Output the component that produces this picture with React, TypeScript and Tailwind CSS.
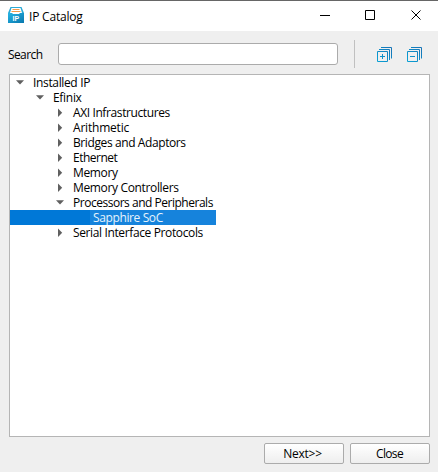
import React from "react";

type Row = { label: string; depth: number; arrow?: "open" | "closed"; tracking: string; selected?: boolean };

const rows: Row[] = [
  { label: "Installed IP", depth: 0, arrow: "open", tracking: "tracking-[-0.35px]" },
  { label: "Efinix", depth: 1, arrow: "open", tracking: "tracking-[-0.3px]" },
  { label: "AXI Infrastructures", depth: 2, arrow: "closed", tracking: "tracking-[-0.39px]" },
  { label: "Arithmetic", depth: 2, arrow: "closed", tracking: "tracking-[-0.2px]" },
  { label: "Bridges and Adaptors", depth: 2, arrow: "closed", tracking: "tracking-[-0.4px]" },
  { label: "Ethernet", depth: 2, arrow: "closed", tracking: "tracking-[-0.5px]" },
  { label: "Memory", depth: 2, arrow: "closed", tracking: "tracking-[-0.35px]" },
  { label: "Memory Controllers", depth: 2, arrow: "closed", tracking: "tracking-[-0.35px]" },
  { label: "Processors and Peripherals", depth: 2, arrow: "open", tracking: "tracking-[-0.48px]" },
  { label: "Sapphire SoC", depth: 3, tracking: "tracking-[-0.38px]", selected: true },
  { label: "Serial Interface Protocols", depth: 2, arrow: "closed", tracking: "tracking-[-0.37px]" },
];

const indents = ["w-0", "w-5", "w-10", "w-[60px]"];

function Arrow({ kind }: { kind?: "open" | "closed" }) {
  return (
    <svg width="20" height="15" viewBox="0 0 20 15" className="shrink-0">
      {kind === "open" && <path d="M6 5.3h8L10 9.6z" fill="#606060" />}
      {kind === "closed" && <path d="M8 3.5v8.5L12.2 7.7z" fill="#606060" />}
    </svg>
  );
}

function StackIcon({ plus }: { plus?: boolean }) {
  const id = plus ? "expandTone" : "collapseTone";
  return (
    <svg width="16" height="16" viewBox="0 0 16 16" fill="none" stroke={`url(#${id})`}>
      <defs>
        <linearGradient id={id} gradientUnits="userSpaceOnUse" x1="0" y1="16" x2="16" y2="0">
          <stop stopColor="#08a5d8" />
          <stop offset="1" stopColor="#176fb3" />
        </linearGradient>
      </defs>
      <path d="M.5 4.5h10v10H.5zM2 2.5h10.500V13M4 .5h10.500V11.500" />
      <path d={plus ? "M3 9.5h5" : "M3 9.5h5"} />
      {plus && <path d="M5.5 7v5" />}
    </svg>
  );
}

export default function App() {
  return (
    <div className="flex h-[472px] w-[438px] flex-col overflow-hidden bg-[#efefef] font-['Open_Sans','Noto_Sans',sans-serif] text-[12px] leading-[15px] text-black">
      <header className="flex h-[31px] shrink-0 items-center border-t border-[#666] bg-white pl-2">
        <svg width="16" height="16" viewBox="0 0 16 16" className="-mt-0.5 shrink-0">
          <defs>
            <linearGradient id="boxTone" x1="0" y1="0" x2="1" y2="1">
              <stop stopColor="#27b5e5" />
              <stop offset="1" stopColor="#0877ad" />
            </linearGradient>
          </defs>
          <path d="M2.5 0h11L16 6H0z" fill="#2aa9d5" />
          <path d="M3.500 1h9l1.500 5H2z" fill="#fff" />
          <path d="M4.500 2.500h7M3.500 4.500h9" stroke="#f09a4a" />
          <path d="M0 6h4l1 1h6l1-1h4v10H0z" fill="url(#boxTone)" />
          <text x="4.6" y="14" fill="white" fontSize="7" fontWeight="700" fontFamily="Liberation Sans, sans-serif">IP</text>
        </svg>
        <h1 className="ml-[5px] text-[12px] font-normal tracking-[-0.2px]">IP Catalog</h1>
        <svg width="102" height="12" viewBox="0 0 102 12" className="-mt-0.5 mr-[16px] ml-auto" fill="none" stroke="#000">
          <path d="M0 6.500h10M45.500 1.500h9v9h-9z" />
          <path d="M91.500 1.500l9 9M100.500 1.500l-9 9" />
        </svg>
      </header>
      <section className="flex h-[43px] shrink-0 items-center pl-2 pt-[3px]">
        <label htmlFor="search" className="w-[50px] tracking-[-0.6px]">Search</label>
        <input id="search" className="h-[22px] w-[280px] rounded-[3px] border border-[#ababab] bg-white outline-none" />
        <div className="ml-4 h-7 w-px bg-[#c0c0c0]" />
        <button className="mt-0.5 ml-[22px]"><StackIcon plus /></button>
        <button className="mt-0.5 ml-[14px]"><StackIcon /></button>
      </section>
      <main className="ml-[9px] h-[363px] w-[421px] shrink-0 border border-[#b5b5b5] bg-white">
        {rows.map((row) => (
          <div key={row.label} className={row.selected ? "flex h-[15px] w-[206px] bg-[#0078d7] text-[#e6f3fc]" : "flex h-[15px]"}>
            <span className={`shrink-0 ${indents[row.depth]}`} />
            <Arrow kind={row.arrow} />
            <span className={`whitespace-nowrap pl-[3px] ${row.tracking} ${row.selected ? "grow bg-[#1683dc]" : ""}`}>{row.label}</span>
          </div>
        ))}
      </main>
      <footer className="flex gap-[6px] pl-[264px] pt-[6px]">
        <button className="h-[21px] w-20 rounded-[2px] border border-[#ababab] bg-linear-to-b from-white to-[#eeeeee] pr-[3px] tracking-[-0.25px]">Next&gt;&gt;</button>
        <button className="h-[21px] w-20 rounded-[2px] border border-[#ababab] bg-linear-to-b from-white to-[#eeeeee] pr-px tracking-[-0.65px]">Close</button>
      </footer>
    </div>
  );
}
